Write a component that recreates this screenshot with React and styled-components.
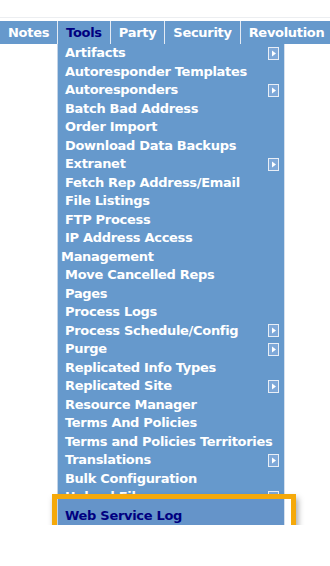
import React from 'react'
import styled, { createGlobalStyle } from 'styled-components'

const GlobalStyle = createGlobalStyle`
  body {
    margin: 0;
    background: #ffffff;
    font-family: 'DejaVu Sans', Verdana, sans-serif;
  }
`

const Page = styled.div`
  padding-top: 17px;
`

const TopRule = styled.div`
  height: 1px;
  background: #eceef1;
  margin-bottom: 3px;
`

const TabBar = styled.div`
  display: flex;
  height: 23px;
  background: #6699cc;
  white-space: nowrap;
  overflow: hidden;
`

const Tab = styled.div`
  display: flex;
  align-items: center;
  padding: 0 8px;
  border-right: 1px solid #e4ebf4;
  font-size: 13px;
  font-weight: bold;
  letter-spacing: -0.3px;
  color: ${p => (p.$active ? '#000080' : '#ffffff')};
  flex-shrink: 0;
`

const MenuWrap = styled.div`
  position: relative;
  margin-left: 57px;
  width: 228px;
`

const Menu = styled.div`
  background: #6699cc;
  border-left: 1px solid #c3d3e6;
  border-right: 1px solid #d5e0ed;
`

const Item = styled.div`
  position: relative;
  display: flex;
  align-items: center;
  padding: 0 5px 0 3px;
  line-height: 18.5px;
  font-size: 13px;
  font-weight: bold;
  letter-spacing: -0.3px;
  color: ${p => (p.$active ? '#000080' : '#ffffff')};
  background: ${p => (p.$active ? '#6594c9' : 'transparent')};
  ${p => p.$active && `
    margin-top: -9px;
    padding-top: 9px;
  `}
`

const Label = styled.span`
  flex: 1;
  text-indent: 4px;
`

const Callout = styled.div`
  position: absolute;
  left: -5px;
  right: -11px;
  bottom: -10px;
  height: 41px;
  box-sizing: border-box;
  border: 5px solid #f5a90a;
  box-shadow: 2px 4px 6px rgba(0, 0, 0, 0.35);
  pointer-events: none;
`

const SubArrow = () => (
  <svg width="11" height="13" viewBox="0 0 11 13" style={{ flexShrink: 0 }}>
    <rect x="0.5" y="0.5" width="10" height="12" fill="#7ea8d8" stroke="#e8eef6" />
    <polygon points="4,3.5 8,6.5 4,9.5" fill="#ffffff" />
  </svg>
)

const tabs = ['Notes', 'Tools', 'Party', 'Security', 'Revolution']

const items = [
  ['Artifacts', true],
  ['Autoresponder Templates'],
  ['Autoresponders', true],
  ['Batch Bad Address'],
  ['Order Import'],
  ['Download Data Backups'],
  ['Extranet', true],
  ['Fetch Rep Address/Email'],
  ['File Listings'],
  ['FTP Process'],
  ['IP Address Access Management'],
  ['Move Cancelled Reps'],
  ['Pages'],
  ['Process Logs'],
  ['Process Schedule/Config', true],
  ['Purge', true],
  ['Replicated Info Types'],
  ['Replicated Site', true],
  ['Resource Manager'],
  ['Terms And Policies'],
  ['Terms and Policies Territories'],
  ['Translations', true],
  ['Bulk Configuration'],
  ['Upload Files', true],
]

export default function App() {
  return (
    <Page>
      <GlobalStyle />
      <TopRule />
      <TabBar>
        {tabs.map(t => (
          <Tab key={t} $active={t === 'Tools'}>{t}</Tab>
        ))}
      </TabBar>
      <MenuWrap>
        <Menu>
          {items.map(([name, sub]) => (
            <Item key={name}>
              <Label>{name}</Label>
              {sub && <SubArrow />}
            </Item>
          ))}
          <Item $active>
            <Label>Web Service Log</Label>
          </Item>
        </Menu>
        <Callout />
      </MenuWrap>
    </Page>
  )
}
